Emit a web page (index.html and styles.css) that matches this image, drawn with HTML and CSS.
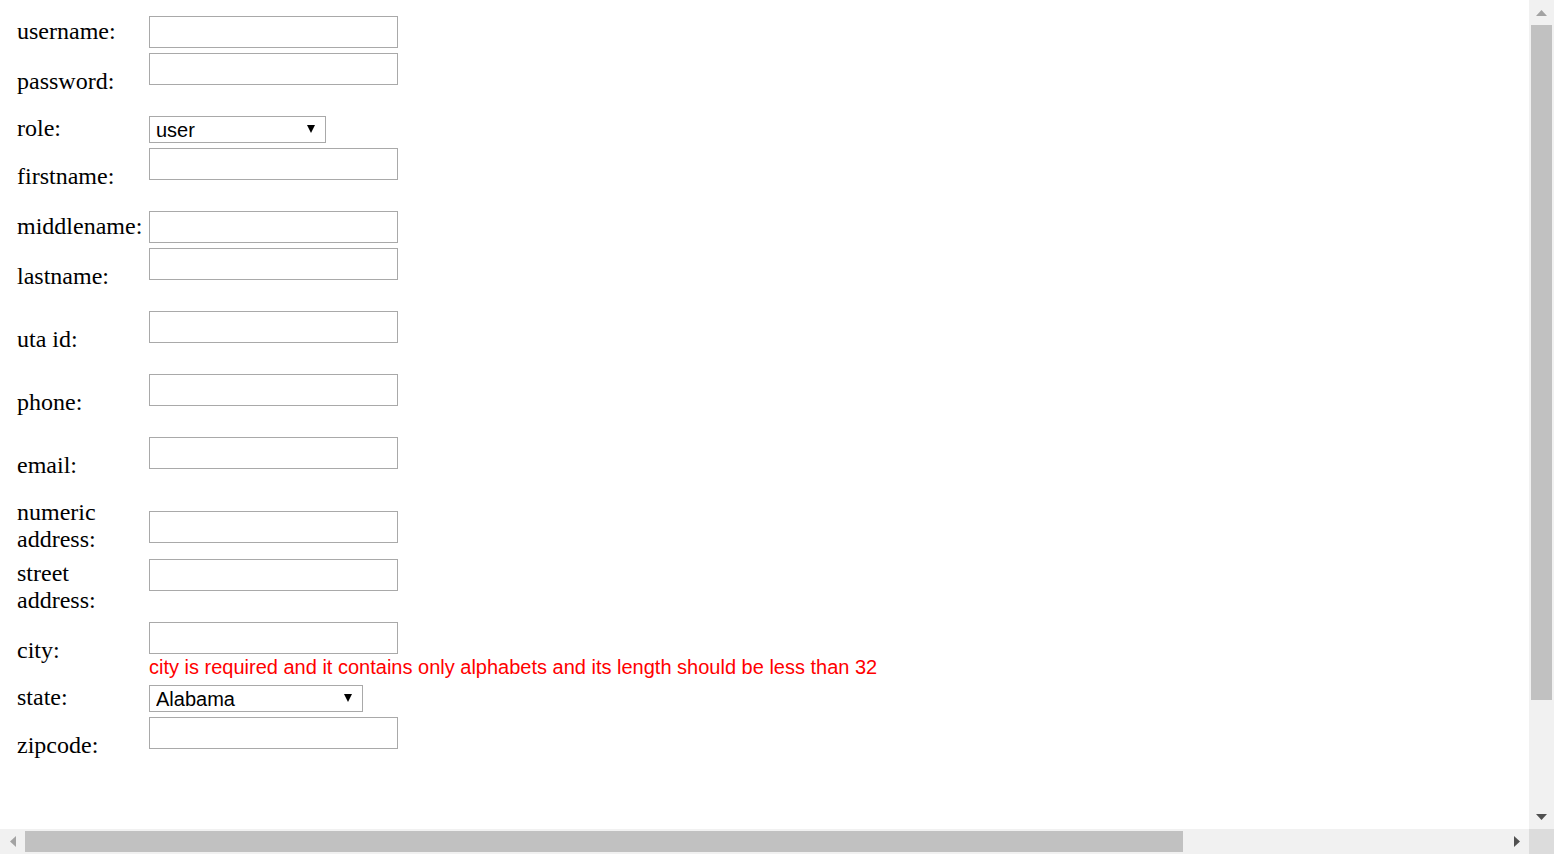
FILE: index.html
```html
<!DOCTYPE html>
<html lang="en">
<head>
<meta charset="utf-8">
<title>Register</title>
<link rel="stylesheet" href="styles.css">
</head>
<body>
<div class="window">
  <div class="viewport">
    <form class="page">
      <table class="form-table">
        <tr>
          <td class="label">username:</td>
          <td class="field"><input class="text-input" type="text"></td>
        </tr>
        <tr>
          <td class="label">password:</td>
          <td class="field"><input class="text-input" type="password"><span class="error"></span></td>
        </tr>
        <tr>
          <td class="label">role:</td>
          <td class="field">
            <span class="select-wrap role">
              <select class="select"><option>user</option><option>admin</option></select>
              <svg class="select-arrow" width="8" height="8" viewBox="0 0 8 8"><path d="M0 0 H8 L4 8 Z" fill="#000"/></svg>
            </span>
          </td>
        </tr>
        <tr>
          <td class="label">firstname:</td>
          <td class="field"><input class="text-input" type="text"><span class="error"></span></td>
        </tr>
        <tr>
          <td class="label">middlename:</td>
          <td class="field"><input class="text-input" type="text"></td>
        </tr>
        <tr>
          <td class="label">lastname:</td>
          <td class="field"><input class="text-input" type="text"><span class="error"></span></td>
        </tr>
        <tr>
          <td class="label">uta id:</td>
          <td class="field"><input class="text-input" type="text"><span class="error"></span></td>
        </tr>
        <tr>
          <td class="label">phone:</td>
          <td class="field"><input class="text-input" type="text"><span class="error"></span></td>
        </tr>
        <tr>
          <td class="label">email:</td>
          <td class="field"><input class="text-input" type="text"><span class="error"></span></td>
        </tr>
        <tr>
          <td class="label">numeric address:</td>
          <td class="field"><input class="text-input" type="text"></td>
        </tr>
        <tr>
          <td class="label">street address:</td>
          <td class="field"><input class="text-input" type="text"><span class="error"></span></td>
        </tr>
        <tr>
          <td class="label">city:</td>
          <td class="field"><input class="text-input" type="text"><span class="error">city is required and it contains only alphabets and its length should be less than 32</span></td>
        </tr>
        <tr>
          <td class="label">state:</td>
          <td class="field">
            <span class="select-wrap state">
              <select class="select"><option>Alabama</option><option>Alaska</option><option>Arizona</option></select>
              <svg class="select-arrow" width="8" height="8" viewBox="0 0 8 8"><path d="M0 0 H8 L4 8 Z" fill="#000"/></svg>
            </span>
          </td>
        </tr>
        <tr>
          <td class="label">zipcode:</td>
          <td class="field"><input class="text-input" type="text"><span class="error"></span></td>
        </tr>
      </table>
    </form>
  </div>
  <div class="vscroll">
    <div class="sb-btn">
      <svg width="11" height="6" viewBox="0 0 11 6"><path d="M0 6 L5.5 0 L11 6 Z" fill="#a3a3a3"/></svg>
    </div>
    <div class="vtrack"><div class="vthumb"></div></div>
    <div class="sb-btn">
      <svg width="11" height="6" viewBox="0 0 11 6"><path d="M0 0 L11 0 L5.5 6 Z" fill="#505050"/></svg>
    </div>
  </div>
  <div class="hscroll">
    <div class="sb-btn">
      <svg width="6" height="11" viewBox="0 0 6 11"><path d="M6 0 L6 11 L0 5.5 Z" fill="#a3a3a3"/></svg>
    </div>
    <div class="htrack"><div class="hthumb"></div></div>
    <div class="sb-btn">
      <svg width="6" height="11" viewBox="0 0 6 11"><path d="M0 0 L6 5.5 L0 11 Z" fill="#505050"/></svg>
    </div>
  </div>
  <div class="corner"></div>
</div>
</body>
</html>
```

FILE: styles.css
```css
html, body {
  margin: 0;
  padding: 0;
  overflow: hidden;
  background: #fff;
}

.window {
  width: 100vw;
  height: 100vh;
  display: grid;
  grid-template-columns: 1fr 25px;
  grid-template-rows: 1fr 25px;
}

.viewport {
  overflow: hidden;
  background: #fff;
  min-width: 0;
  min-height: 0;
}

.page {
  margin: 0;
  width: 1953px;
  height: 957px;
}

.form-table {
  border-spacing: 3px;
  border-collapse: separate;
  margin: 12px 0 0 13px;
}

.form-table td {
  padding: 1px;
  vertical-align: middle;
}

.form-table td.label {
  padding: 0 1px 2px 1px;
}

.label {
  width: 127px;
  font-family: "Liberation Serif", "Times New Roman", serif;
  font-size: 24px;
  line-height: 27px;
  color: #000;
}

.field {
  font-family: "Liberation Sans", Arial, sans-serif;
  font-size: 20px;
  line-height: 26px;
}

.text-input {
  display: block;
  box-sizing: border-box;
  width: 249px;
  height: 32px;
  margin: 0;
  padding: 1px 3px;
  border: 1px solid #a9a9a9;
  border-radius: 0;
  background: #fff;
  font-family: "Liberation Sans", Arial, sans-serif;
  font-size: 20px;
  outline: none;
}

.error {
  display: block;
  height: 26px;
  color: #ff0000;
  white-space: nowrap;
}

.select-wrap {
  position: relative;
  display: block;
  height: 27px;
}

.select-wrap.role {
  width: 177px;
}

.select-wrap.state {
  width: 214px;
}

.select {
  -webkit-appearance: none;
  appearance: none;
  display: block;
  box-sizing: border-box;
  width: 100%;
  height: 27px;
  margin: 0;
  padding: 2px 0 0 6px;
  border: 1px solid #a9a9a9;
  border-radius: 0;
  background: #fff;
  color: #000;
  font-family: "Liberation Sans", Arial, sans-serif;
  font-size: 20px;
  line-height: 23px;
  outline: none;
}

.select-arrow {
  position: absolute;
  right: 11px;
  top: 9px;
  pointer-events: none;
}

/* scrollbars */
.vscroll {
  background: #f1f1f1;
  display: flex;
  flex-direction: column;
}

.hscroll {
  background: #f1f1f1;
  display: flex;
  flex-direction: row;
}

.sb-btn {
  flex: 0 0 25px;
  width: 25px;
  height: 25px;
  display: flex;
  align-items: center;
  justify-content: center;
}

.vtrack {
  flex: 1;
  padding: 0 2px;
}

.vthumb {
  height: 675px;
  background: #c1c1c1;
}

.htrack {
  flex: 1;
  padding: 2px 0;
}

.hthumb {
  width: 1158px;
  height: 100%;
  background: #c1c1c1;
}

.corner {
  background: #dcdcdc;
}
```
